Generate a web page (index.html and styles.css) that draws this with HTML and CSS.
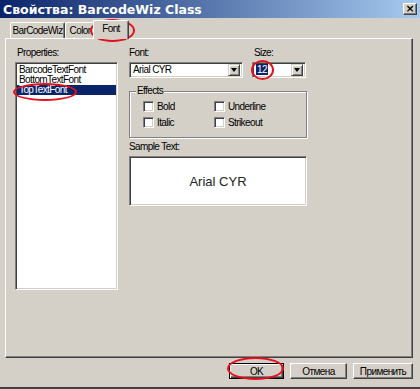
FILE: index.html
```html
<!DOCTYPE html>
<html lang="ru">
<head>
    <meta charset="UTF-8">
    <title>Свойства: BarcodeWiz Class</title>
    <link rel="stylesheet" href="styles.css">
</head>
<body>

<div class="dialog">
    <div class="titlebar">
        <span class="title">Свойства: BarcodeWiz Class</span>
        <span class="close-btn">×</span>
    </div>

    <div class="dialog-body">
        <div class="tabs">
            <div class="tab tab-wiz">BarCodeWiz</div>
            <div class="tab tab-color">Color</div>
            <div class="tab tab-font tab-active">Font</div>
        </div>

        <div class="panel">
            <div class="prop-col">
                <div class="label label-props">Properties:</div>
                <ul class="listbox">
                    <li>BarcodeTextFont</li>
                    <li>BottomTextFont</li>
                    <li class="selected">TopTextFont</li>
                </ul>
            </div>

            <div class="font-col">
                <div class="font-row">
                    <div class="field field-font">
                        <div class="label">Font:</div>
                        <div class="combo">
                            <span class="combo-text">Arial CYR</span>
                            <span class="combo-btn"><span class="arrow"></span></span>
                        </div>
                    </div>
                    <div class="field field-size">
                        <div class="label label-size">Size:</div>
                        <div class="combo">
                            <span class="combo-text"><span class="sel">12</span></span>
                            <span class="combo-btn"><span class="arrow"></span></span>
                        </div>
                    </div>
                </div>

                <div class="effects">
                    <span class="group-title">Effects</span>
                    <label class="check"><span class="box"></span>Bold</label>
                    <label class="check"><span class="box"></span>Underline</label>
                    <label class="check"><span class="box"></span>Italic</label>
                    <label class="check"><span class="box"></span>Strikeout</label>
                </div>

                <div class="label label-sample">Sample Text:</div>
                <div class="sample">Arial CYR</div>
            </div>
        </div>

        <div class="buttons">
            <button class="btn btn-ok btn-default">OK</button>
            <button class="btn btn-cancel">Отмена</button>
            <button class="btn btn-apply">Применить</button>
        </div>
    </div>

    <!-- red marks drawn over the screenshot -->
    <span class="mark mark-tab"></span>
    <span class="mark mark-item"></span>
    <span class="mark mark-size"></span>
    <span class="mark mark-ok"></span>
</div>

</body>
</html>
```

FILE: styles.css
```css
* {
    margin: 0;
    padding: 0;
    box-sizing: border-box;
}

body {
    width: 420px;
    height: 389px;
    background-color: #d4d0c8;
    font-family: "Liberation Sans", Arial, sans-serif;
    font-size: 10px;
    letter-spacing: -0.6px;
    color: #000;
}

.dialog {
    position: relative;
    width: 420px;
    height: 389px;
    background-color: #d4d0c8;
    border-bottom: 2px solid #404040;
}

/* title bar */
.titlebar {
    height: 18px;
    display: flex;
    align-items: center;
    justify-content: space-between;
    padding: 0 3px 0 3px;
    background: linear-gradient(to right, #0a246a 0%, #a6caf0 100%);
}

.title {
    font-family: "DejaVu Sans", sans-serif;
    font-weight: bold;
    font-size: 12.5px;
    letter-spacing: 0;
    color: #fff;
}

.close-btn {
    width: 14px;
    height: 12px;
    background-color: #d4d0c8;
    border: 1px solid;
    border-color: #fff #404040 #404040 #fff;
    box-shadow: inset -1px -1px #808080;
    font-family: "DejaVu Sans", sans-serif;
    font-weight: bold;
    font-size: 11px;
    letter-spacing: 0;
    line-height: 9px;
    text-align: center;
}

.dialog-body {
    padding: 2px 7px 0 5px;
}

/* tabs */
.tabs {
    display: flex;
    align-items: flex-end;
    height: 18px;
    padding-left: 5px;
}

.tab {
    height: 16px;
    line-height: 15px;
    text-align: center;
    white-space: nowrap;
    border: 1px solid;
    border-color: #fff #404040 transparent #fff;
    border-bottom: none;
    border-radius: 2px 2px 0 0;
    box-shadow: inset -1px 0 #808080;
}

.tab-wiz {
    width: 55px;
}

.tab-color {
    width: 30px;
}

.tab-font {
    width: 36px;
    margin-left: -2px;
}

.tab-active {
    position: relative;
    z-index: 1;
    height: 19px;
    margin-bottom: -1px;
    background-color: #d4d0c8;
    line-height: 16px;
}

/* page */
.panel {
    height: 320px;
    display: flex;
    gap: 11px;
    padding: 8px 0 0 9px;
    border: 1px solid;
    border-color: #fff #404040 #404040 #fff;
    box-shadow: inset -1px -1px #808080;
}

.label {
    height: 12px;
    line-height: 12px;
    margin-bottom: 3px;
    white-space: nowrap;
}

.label-props {
    margin-left: 2px;
}

.label-size {
    margin-left: 2px;
}

.label-sample {
    margin-top: 3px;
}

.listbox {
    list-style: none;
    width: 103px;
    height: 228px;
    padding: 2px 1px;
    background-color: #fff;
    border: 1px solid;
    border-color: #808080 #fff #fff #808080;
    box-shadow: inset 1px 1px #404040, inset -1px -1px #d4d0c8;
}

.listbox li {
    height: 10px;
    line-height: 10px;
    padding-left: 2px;
    white-space: nowrap;
}

.listbox li.selected {
    background-color: #0a246a;
    color: #fff;
}

.font-col {
    width: 178px;
}

.font-row {
    display: flex;
    gap: 9px;
}

.field-font {
    width: 114px;
}

.field-size {
    width: 54px;
}

.combo {
    height: 16px;
    display: flex;
    align-items: center;
    justify-content: space-between;
    padding: 2px;
    background-color: #fff;
    border: 1px solid;
    border-color: #808080 #fff #fff #808080;
    box-shadow: inset 1px 1px #404040, inset -1px -1px #d4d0c8;
}

.combo-text {
    padding-left: 1px;
    line-height: 12px;
    white-space: nowrap;
}

.sel {
    background-color: #0a246a;
    color: #fff;
    padding: 0 1px;
}

.combo-btn {
    width: 12px;
    height: 12px;
    display: flex;
    align-items: center;
    justify-content: center;
    background-color: #d4d0c8;
    border: 1px solid;
    border-color: #d4d0c8 #404040 #404040 #d4d0c8;
    box-shadow: inset 1px 1px #fff, inset -1px -1px #808080;
}

.arrow {
    width: 0;
    height: 0;
    border-top: 4px solid #000;
    border-left: 3.5px solid transparent;
    border-right: 3.5px solid transparent;
}

/* effects group */
.effects {
    position: relative;
    height: 47px;
    margin-top: 13px;
    display: grid;
    grid-template-columns: 71px auto;
    grid-auto-rows: 11px;
    row-gap: 5px;
    padding: 9px 0 0 13px;
    border: 1px solid #808080;
    box-shadow: 1px 1px 0 #fff, inset 1px 1px 0 #fff;
}

.group-title {
    position: absolute;
    top: -7px;
    left: 6px;
    padding: 0 1px;
    line-height: 12px;
    background-color: #d4d0c8;
}

.check {
    display: flex;
    align-items: center;
    gap: 3px;
    height: 11px;
    white-space: nowrap;
}

.box {
    width: 11px;
    height: 11px;
    background-color: #fff;
    border: 1px solid;
    border-color: #808080 #fff #fff #808080;
    box-shadow: inset 1px 1px #404040, inset -1px -1px #d4d0c8;
}

.sample {
    height: 50px;
    display: flex;
    align-items: center;
    justify-content: center;
    background-color: #fff;
    border: 1px solid;
    border-color: #808080 #fff #fff #808080;
    box-shadow: inset 1px 1px #404040, inset -1px -1px #d4d0c8;
    font-family: "Liberation Sans", Arial, sans-serif;
    font-size: 13px;
    letter-spacing: 0;
    color: #222;
}

/* buttons */
.buttons {
    display: flex;
    justify-content: flex-end;
    gap: 6px;
    margin-top: 5px;
}

.btn {
    height: 16px;
    background-color: #d4d0c8;
    border: 1px solid;
    border-color: #fff #404040 #404040 #fff;
    box-shadow: inset -1px -1px #808080;
    font: inherit;
    letter-spacing: -0.6px;
    color: #000;
}

.btn-ok {
    width: 55px;
}

.btn-cancel {
    width: 57px;
}

.btn-apply {
    width: 60px;
}

.btn-default {
    border-color: #000;
    box-shadow: inset 1px 1px #fff, inset -1px -1px #404040, inset -2px -2px #808080;
}

/* annotation ellipses */
.mark {
    position: absolute;
    border: 2px solid #e4101c;
    border-radius: 50%;
}

.mark-tab {
    left: 90px;
    top: 19px;
    width: 45px;
    height: 23px;
}

.mark-item {
    left: 13px;
    top: 83px;
    width: 64px;
    height: 18px;
}

.mark-size {
    left: 251px;
    top: 60px;
    width: 23px;
    height: 20px;
}

.mark-ok {
    left: 227px;
    top: 357px;
    width: 57px;
    height: 23px;
}
```
